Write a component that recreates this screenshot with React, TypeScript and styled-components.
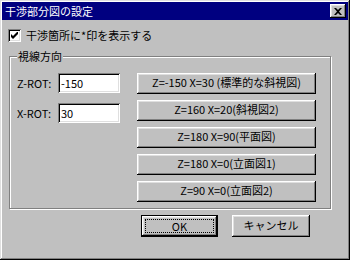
import React from "react";
import styled, { createGlobalStyle } from "styled-components";

const GlobalStyle = createGlobalStyle`
  body {
    margin: 0;
    background: #c0c0c0;
  }
`;

const font = `"Noto Sans CJK JP", "DejaVu Sans", sans-serif`;

const bevelOut = `
  inset -1px -1px 0 #000,
  inset 1px 1px 0 #fff,
  inset -2px -2px 0 #808080,
  inset 2px 2px 0 #dfdfdf
`;

const bevelIn = `
  inset 1px 1px 0 #808080,
  inset -1px -1px 0 #fff,
  inset 2px 2px 0 #000,
  inset -2px -2px 0 #dfdfdf
`;

const Window = styled.div`
  width: 350px;
  height: 260px;
  box-sizing: border-box;
  padding: 2px;
  background: #c0c0c0;
  box-shadow: inset -1px -1px 0 #000, inset 1px 1px 0 #dfdfdf,
    inset -2px -2px 0 #808080, inset 2px 2px 0 #fff;
  font-family: ${font};
  font-size: 11px;
  color: #000;
  display: flex;
  flex-direction: column;
`;

const TitleBar = styled.div`
  height: 18px;
  background: #000080;
  color: #fff;
  display: flex;
  align-items: center;
  justify-content: space-between;
  padding: 0 2px 0 3px;
  font-size: 11px;
  line-height: 18px;
`;

const CloseButton = styled.div`
  width: 16px;
  height: 14px;
  background: #c0c0c0;
  box-shadow: ${bevelOut};
  display: flex;
  align-items: center;
  justify-content: center;
`;

const CheckRow = styled.label`
  display: flex;
  align-items: center;
  gap: 5px;
  margin: 8px 0 0 6px;
  height: 14px;
  line-height: 14px;
`;

const CheckBox = styled.div`
  width: 13px;
  height: 13px;
  box-sizing: border-box;
  background: #fff;
  box-shadow: ${bevelIn};
  display: flex;
  align-items: center;
  justify-content: center;
`;

const Group = styled.fieldset`
  width: 322px;
  box-sizing: border-box;
  margin: 7px 0 0 7px;
  padding: 10px 13px 6px 7px;
  border: 1px solid #808080;
  box-shadow: inset 1px 1px 0 #fff, 1px 1px 0 #fff;
  display: flex;
  gap: 17px;
`;

const Legend = styled.legend`
  padding: 0 1px;
  margin-left: 0;
  background: #c0c0c0;
  line-height: 14px;
  font-size: 11px;
`;

const Fields = styled.div`
  display: flex;
  flex-direction: column;
  gap: 10px;
`;

const FieldRow = styled.div`
  display: flex;
  align-items: center;
  height: 20px;
`;

const FieldLabel = styled.span`
  width: 41px;
`;

const TextBox = styled.div`
  width: 62px;
  height: 20px;
  box-sizing: border-box;
  padding: 0 3px;
  background: #fff;
  box-shadow: ${bevelIn};
  line-height: 20px;
`;

const Presets = styled.div`
  display: flex;
  flex-direction: column;
  gap: 6px;
`;

const Button = styled.div<{ $width: number; $height: number; $default?: boolean }>`
  width: ${(p) => p.$width}px;
  height: ${(p) => p.$height}px;
  box-sizing: border-box;
  background: #c0c0c0;
  box-shadow: ${bevelOut};
  border: ${(p) => (p.$default ? "1px solid #000" : "none")};
  display: flex;
  align-items: stretch;
  justify-content: center;
  line-height: ${(p) => p.$height - 2}px;
  text-align: center;
  white-space: nowrap;
`;

const FocusRect = styled.span`
  flex: 1;
  margin: 3px;
  border: 1px dotted #000;
  line-height: 12px;
  display: flex;
  align-items: center;
  justify-content: center;
`;

const Footer = styled.div`
  display: flex;
  gap: 14px;
  margin: 6px 0 0 139px;
`;

const presets = [
  "Z=-150 X=30 (標準的な斜視図)",
  "Z=160 X=20(斜視図2)",
  "Z=180 X=90(平面図)",
  "Z=180 X=0(立面図1)",
  "Z=90 X=0(立面図2)",
];

export default function App() {
  return (
    <>
      <GlobalStyle />
      <Window>
        <TitleBar>
          <span>干渉部分図の設定</span>
          <CloseButton>
            <svg width="8" height="7" viewBox="0 0 8 7">
              <path
                d="M0 0h2l2 2 2-2h2L5 3.5 8 7H6L4 5 2 7H0l3-3.5z"
                fill="#000"
              />
            </svg>
          </CloseButton>
        </TitleBar>
        <CheckRow>
          <CheckBox>
            <svg width="7" height="7" viewBox="0 0 7 7">
              <path d="M0 2v3l2 2 5-5V-1L2 4z" fill="#000" />
            </svg>
          </CheckBox>
          干渉箇所に*印を表示する
        </CheckRow>
        <Group>
          <Legend>視線方向</Legend>
          <Fields>
            <FieldRow>
              <FieldLabel>Z-ROT:</FieldLabel>
              <TextBox>-150</TextBox>
            </FieldRow>
            <FieldRow>
              <FieldLabel>X-ROT:</FieldLabel>
              <TextBox>30</TextBox>
            </FieldRow>
          </Fields>
          <Presets>
            {presets.map((label) => (
              <Button key={label} $width={179} $height={21}>
                {label}
              </Button>
            ))}
          </Presets>
        </Group>
        <Footer>
          <Button $width={77} $height={22} $default>
            <FocusRect>OK</FocusRect>
          </Button>
          <Button $width={78} $height={22}>
            キャンセル
          </Button>
        </Footer>
      </Window>
    </>
  );
}
